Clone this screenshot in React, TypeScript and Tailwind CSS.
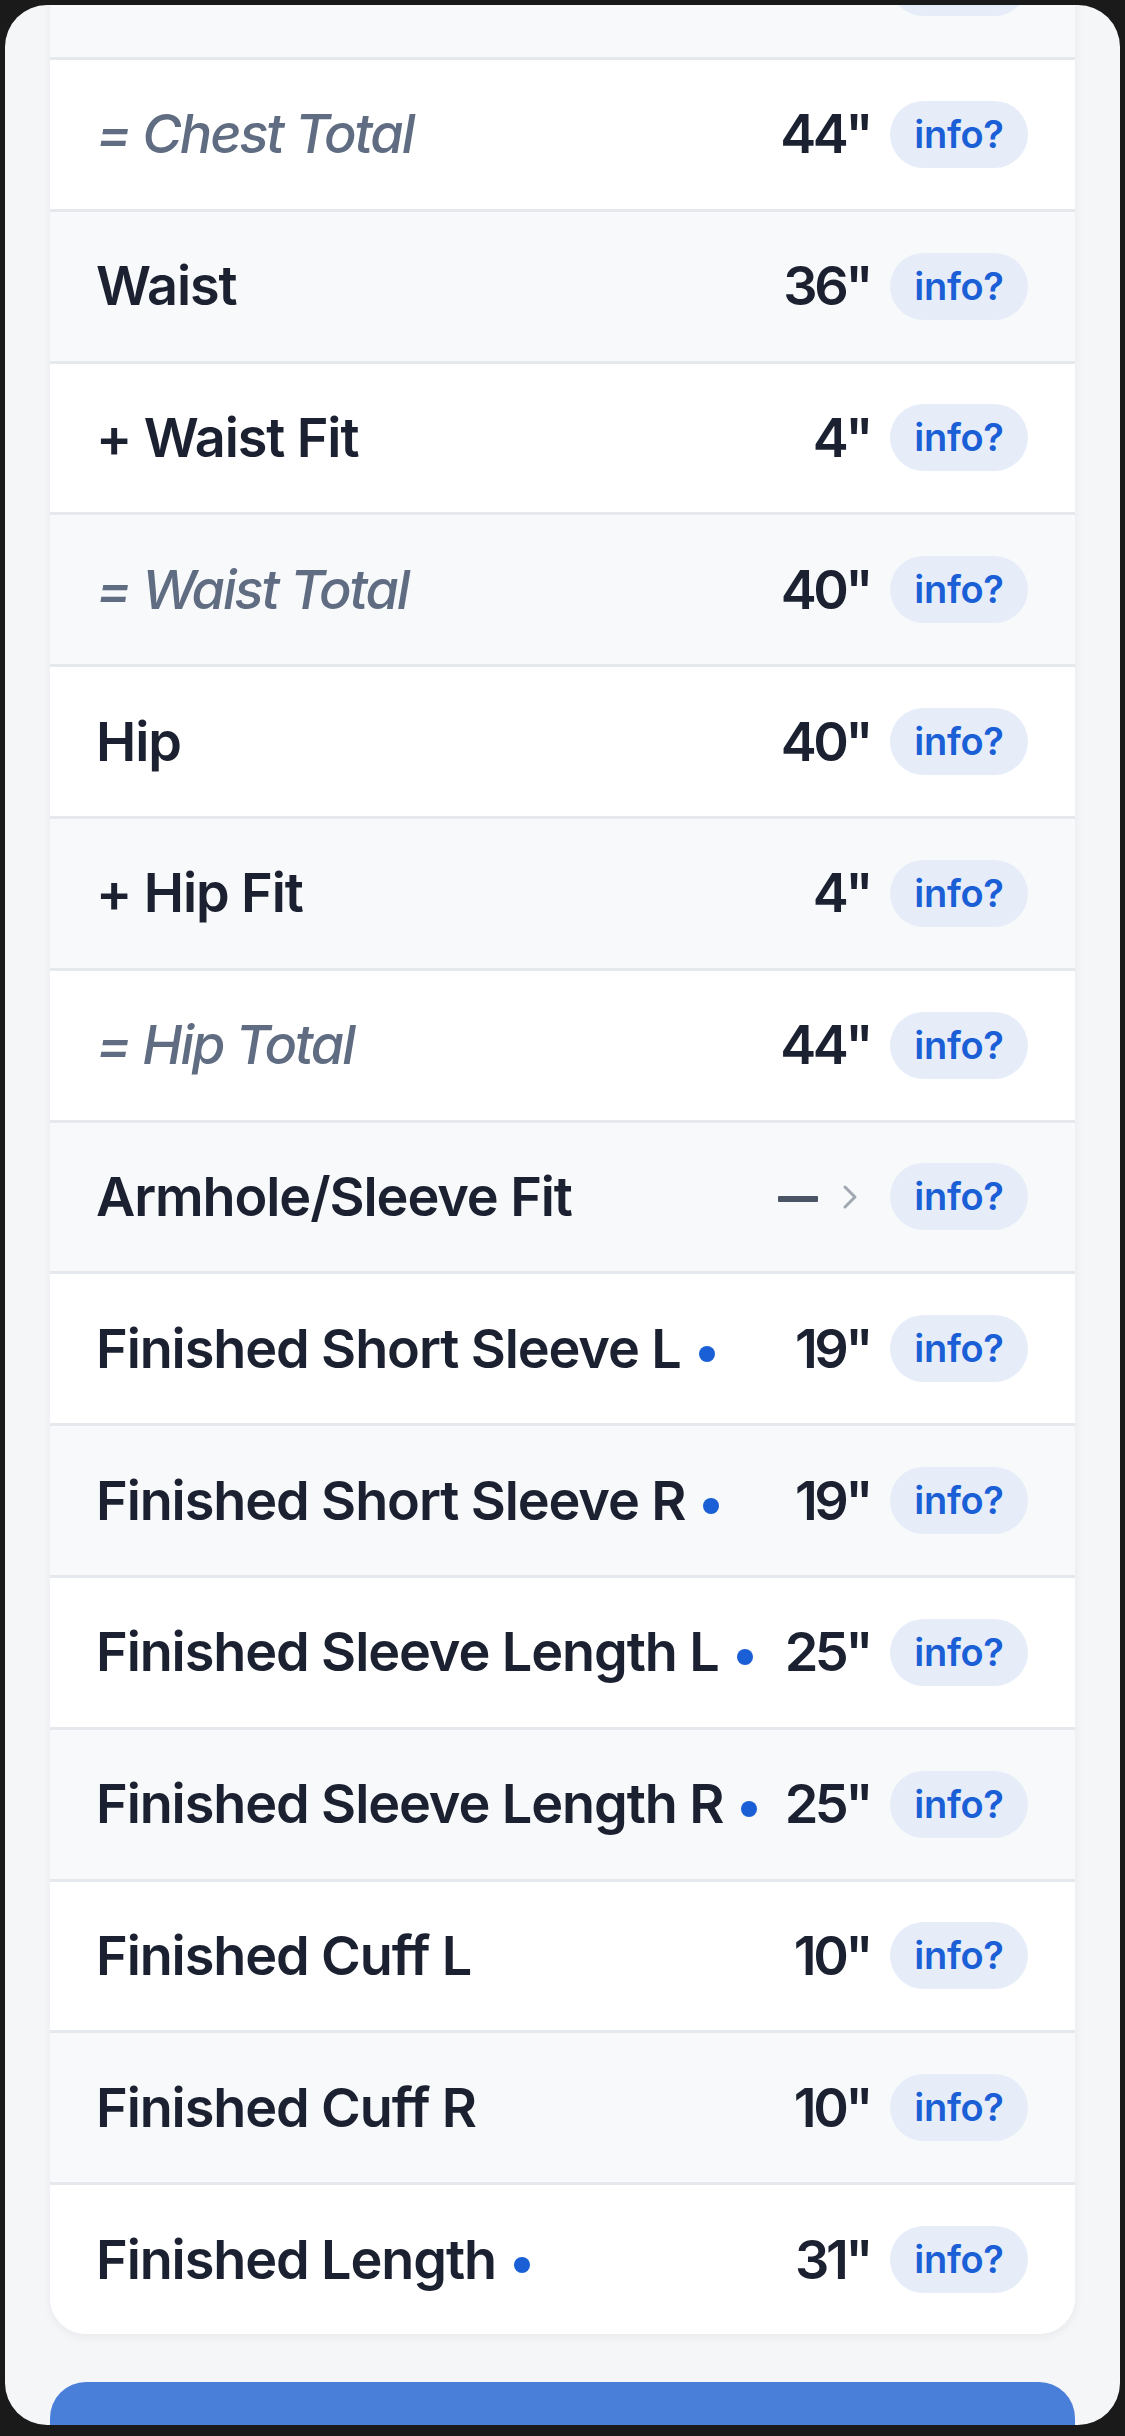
import React from "react";

type Row = {
  label: string;
  value?: string;
  kind?: "total" | "normal" | "nav";
  dot?: boolean;
};

const rows: Row[] = [
  { label: "= Chest Total", value: "44\"", kind: "total" },
  { label: "Waist", value: "36\"" },
  { label: "+ Waist Fit", value: "4\"" },
  { label: "= Waist Total", value: "40\"", kind: "total" },
  { label: "Hip", value: "40\"" },
  { label: "+ Hip Fit", value: "4\"" },
  { label: "= Hip Total", value: "44\"", kind: "total" },
  { label: "Armhole/Sleeve Fit", kind: "nav" },
  { label: "Finished Short Sleeve L", value: "19\"", dot: true },
  { label: "Finished Short Sleeve R", value: "19\"", dot: true },
  { label: "Finished Sleeve Length L", value: "25\"", dot: true },
  { label: "Finished Sleeve Length R", value: "25\"", dot: true },
  { label: "Finished Cuff L", value: "10\"" },
  { label: "Finished Cuff R", value: "10\"" },
  { label: "Finished Length", value: "31\"", dot: true },
];

const font = { fontFamily: "Inter, 'Noto Sans', sans-serif" };

function InfoPill() {
  return (
    <div className="ml-[20px] flex h-[67px] w-[138px] shrink-0 items-center justify-center rounded-full bg-[#e6edf9] text-[38px] font-semibold tracking-[-0.3px] text-[#1a5fd6]">
      info?
    </div>
  );
}

function MeasureRow({ row, index }: { row: Row; index: number }) {
  const gray = index % 2 === 1;
  return (
    <div
      className={`flex h-[151.8px] items-center border-t-[3px] border-[#e5e8ec] pl-[46px] pr-[47px] ${
        gray ? "bg-[#f8f9fa]" : "bg-white"
      }`}
    >
      <div className="flex min-w-0 flex-1 items-center whitespace-nowrap">
        {row.kind === "total" ? (
          <span className="text-[54px] font-medium italic leading-none tracking-[-2.1px] text-[#5f6c81]">
            {row.label}
          </span>
        ) : (
          <span className="text-[54px] font-semibold leading-none tracking-[-1.1px] text-[#1b2130]">
            {row.label}
          </span>
        )}
        {row.dot && (
          <span className="ml-[18px] mt-[10px] h-[16px] w-[16px] shrink-0 rounded-full bg-[#1a5fd6]" />
        )}
      </div>
      {row.kind === "nav" ? (
        <div className="mr-[12px] flex items-center">
          <span className="mt-[4px] block h-[6px] w-[40px] rounded-[1px] bg-[#4b5566]" />
          <svg
            className="ml-[24px]"
            width="16"
            height="26"
            viewBox="0 0 16 26"
            fill="none"
          >
            <polyline
              points="3,3 13,13 3,23"
              stroke="#a1a8b2"
              strokeWidth="3"
              strokeLinecap="round"
              strokeLinejoin="round"
            />
          </svg>
        </div>
      ) : (
        <span className="whitespace-nowrap text-right text-[54px] font-semibold leading-none tracking-[-3.5px] text-[#1b2130]">
          {row.value}
        </span>
      )}
      <InfoPill />
    </div>
  );
}

export default function App() {
  return (
    <div className="h-[2436px] w-[1125px] bg-[#1a1a1a] px-[5px] pt-[5px]" style={font}>
      <div className="flex h-[2420px] flex-col overflow-hidden rounded-[42px] bg-[#f5f6f8]">
        <div className="mx-[45px] -mt-[96.7px] shrink-0 overflow-hidden rounded-b-[36px] bg-white shadow-[0_3px_10px_rgba(20,30,50,0.06)]">
          <div className="flex h-[148.7px] items-center justify-end bg-[#f8f9fa] pr-[47px]">
            <InfoPill />
          </div>
          {rows.map((r, i) => (
            <MeasureRow key={r.label} row={r} index={i} />
          ))}
        </div>
        <div className="mx-[45px] mt-[48px] h-[120px] shrink-0 rounded-t-[36px] bg-[#4a7fd9]" />
      </div>
    </div>
  );
}
